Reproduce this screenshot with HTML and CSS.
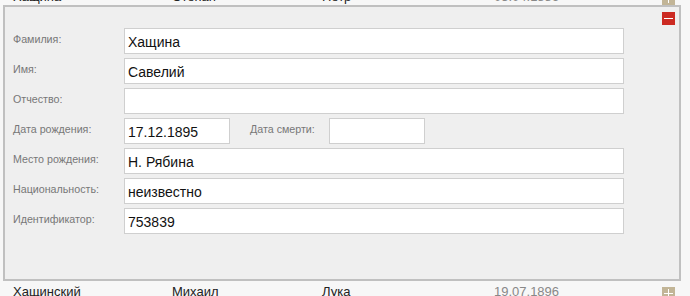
FILE: index.html
```html
<!DOCTYPE html>
<html lang="ru">
<head>
	<meta charset="UTF-8">
	<title>Люди</title>
	<link rel="stylesheet" href="styles.css">
</head>
<body>
	<div class="list">
		<div class="row row_first">
			<span class="col col_last">Хащина</span>
			<span class="col col_first">Степан</span>
			<span class="col col_middle">Петр</span>
			<span class="col col_date">03.04.1886</span>
			<span class="btn btn_plus"></span>
		</div>

		<div class="editor">
			<span class="btn btn_minus"></span>
			<div class="field">
				<label>Фамилия:</label>
				<input type="text" class="inp" value="Хащина">
			</div>
			<div class="field">
				<label>Имя:</label>
				<input type="text" class="inp" value="Савелий">
			</div>
			<div class="field">
				<label>Отчество:</label>
				<input type="text" class="inp" value="">
			</div>
			<div class="field">
				<label>Дата рождения:</label>
				<input type="text" class="inp inp_date" value="17.12.1895">
				<label class="label_death">Дата смерти:</label>
				<input type="text" class="inp inp_death" value="">
			</div>
			<div class="field">
				<label>Место рождения:</label>
				<input type="text" class="inp" value="Н. Рябина">
			</div>
			<div class="field">
				<label>Национальность:</label>
				<input type="text" class="inp" value="неизвестно">
			</div>
			<div class="field">
				<label>Идентификатор:</label>
				<input type="text" class="inp" value="753839">
			</div>
		</div>

		<div class="row">
			<span class="col col_last">Хащинский</span>
			<span class="col col_first">Михаил</span>
			<span class="col col_middle">Лука</span>
			<span class="col col_date">19.07.1896</span>
			<span class="btn btn_plus"></span>
		</div>
	</div>
</body>
</html>
```

FILE: styles.css
```css
html, body {
	margin: 0;
	background: #f7f7f7;
	font-family: "Liberation Sans", Arial, sans-serif;
	overflow: hidden;
}

.list {
	width: 681px;
}

.row {
	display: flex;
	align-items: flex-start;
	height: 20px;
	padding: 2px 0 0 13px;
	box-sizing: border-box;
	font-size: 13px;
	line-height: 18px;
	color: #222;
}

.row_first {
	margin-top: -15px;
	padding-top: 3px;
}

.row_first .btn {
	margin-top: 3px;
}

.col_last {
	width: 159px;
}

.col_first {
	width: 150px;
}

.col_middle {
	width: 172px;
}

.col_date {
	width: 168px;
	color: #888;
}

.btn {
	display: block;
	width: 13px;
	height: 13px;
	position: relative;
}

.row .btn {
	margin-top: 4px;
}

.btn_plus {
	background: #c2b597;
}

.btn_plus::before,
.btn_plus::after {
	content: "";
	position: absolute;
	background: #fff;
}

.btn_plus::before {
	left: 2px;
	right: 2px;
	top: 6px;
	height: 1px;
}

.btn_plus::after {
	top: 2px;
	bottom: 2px;
	left: 6px;
	width: 1px;
}

.editor {
	position: relative;
	margin-left: 3px;
	border: 2px solid #c0c0c0;
	background: #efefef;
	padding: 21px 0 45px 8px;
	display: flex;
	flex-direction: column;
	gap: 4px;
}

.btn_minus {
	position: absolute;
	top: 5px;
	right: 4px;
	background: #cc2a22;
}

.btn_minus::before {
	content: "";
	position: absolute;
	left: 2px;
	right: 2px;
	top: 6px;
	height: 1px;
	background: #fff;
}

.field {
	display: flex;
	align-items: center;
	height: 26px;
}

.field label {
	width: 111px;
	font-size: 10.7px;
	color: #777;
	margin-top: -4px;
}

.inp {
	box-sizing: border-box;
	width: 500px;
	height: 26px;
	margin: 0;
	padding: 2px 3px 0;
	border: 1px solid #cfcfcf;
	background: #fff;
	font-family: "Liberation Sans", Arial, sans-serif;
	font-size: 14px;
	color: #111;
	outline: none;
}

.inp_date {
	width: 106px;
}

.field .label_death {
	width: 79px;
	margin-left: 20px;
}

.inp_death {
	width: 96px;
}
```
